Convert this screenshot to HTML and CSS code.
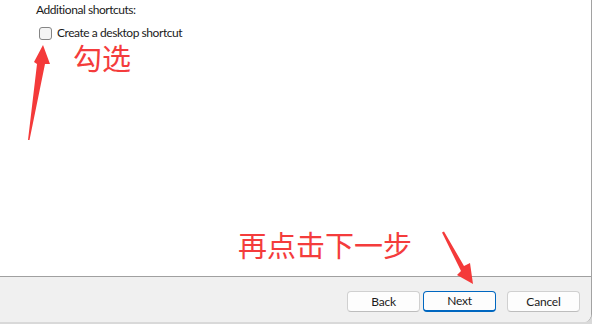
FILE: index.html
```html
<!DOCTYPE html>
<html lang="en">
<head>
<meta charset="utf-8">
<title>Setup - Select Additional Tasks</title>
<link rel="stylesheet" href="styles.css">
</head>
<body>
<div class="window">
  <div class="content">
    <div class="section-title">Additional shortcuts:</div>
    <label class="check-row">
      <span class="checkbox"></span>
      <span class="check-label">Create a desktop shortcut</span>
    </label>
  </div>
  <div class="footer">
    <button class="btn">Back</button>
    <button class="btn btn-default">Next</button>
    <button class="btn btn-cancel">Cancel</button>
  </div>
</div>

<div class="note note-check">勾选</div>
<div class="note note-next">再点击下一步</div>

<svg class="arrows" width="592" height="324" viewBox="0 0 592 324">
  <polygon class="arrow" points="28,140 37,64 34,62 43,45 50,64 45,64 29.5,140"/>
  <polygon class="arrow" points="442,232.5 444,231.5 464,266 470,263 473,284 457,275 461,271"/>
</svg>
</body>
</html>
```

FILE: styles.css
```css
html, body {
  margin: 0;
  padding: 0;
}

body {
  width: 592px;
  height: 324px;
  background: #d9d9d9;
  position: relative;
  overflow: hidden;
  font-family: Lato, "Noto Sans", sans-serif;
  font-size: 12px;
  color: #1b1b1b;
}

.window {
  width: 591px;
  height: 322px;
  display: flex;
  flex-direction: column;
  border-right: 1px solid #a2a2a2;
  border-bottom-right-radius: 8px;
  overflow: hidden;
  background: #ffffff;
}

.content {
  flex: 1;
  padding: 2px 0 0 36px;
  letter-spacing: -0.45px;
}

.section-title {
  line-height: 16px;
}

.check-row {
  display: flex;
  align-items: center;
  margin-top: 7px;
  height: 16px;
}

.checkbox {
  width: 11px;
  height: 11px;
  margin-left: 3px;
  border: 1px solid #858585;
  border-radius: 3px;
  background: #f4f4f4;
}

.check-label {
  margin-left: 5px;
  line-height: 16px;
}

.footer {
  height: 46px;
  box-sizing: border-box;
  border-top: 1px solid #a0a0a0;
  background: #f0f0f0;
  display: flex;
  justify-content: flex-end;
  align-items: flex-start;
  padding: 14px 11px 0 0;
  gap: 3px;
}

.btn {
  width: 73px;
  height: 21px;
  box-sizing: border-box;
  border: 1px solid #d0d0d0;
  border-bottom-color: #bdbdbd;
  border-radius: 4px;
  background: #fdfdfd;
  font-family: inherit;
  font-size: 12px;
  letter-spacing: -0.2px;
  color: #1b1b1b;
  padding: 0;
  line-height: 18px;
}

.btn-default {
  border: 1px solid #0067c0;
  border-bottom: 2px solid #0067c0;
}

.btn-cancel {
  margin-left: 8px;
}

.note {
  position: absolute;
  font-family: "Noto Sans CJK SC", sans-serif;
  font-size: 29px;
  line-height: 29px;
  color: #f43c3c;
  white-space: nowrap;
}

.note-check {
  left: 73px;
  top: 43px;
}

.note-next {
  left: 238px;
  top: 230px;
}

.arrows {
  position: absolute;
  left: 0;
  top: 0;
}

.arrow {
  fill: #f43a3a;
}
```
